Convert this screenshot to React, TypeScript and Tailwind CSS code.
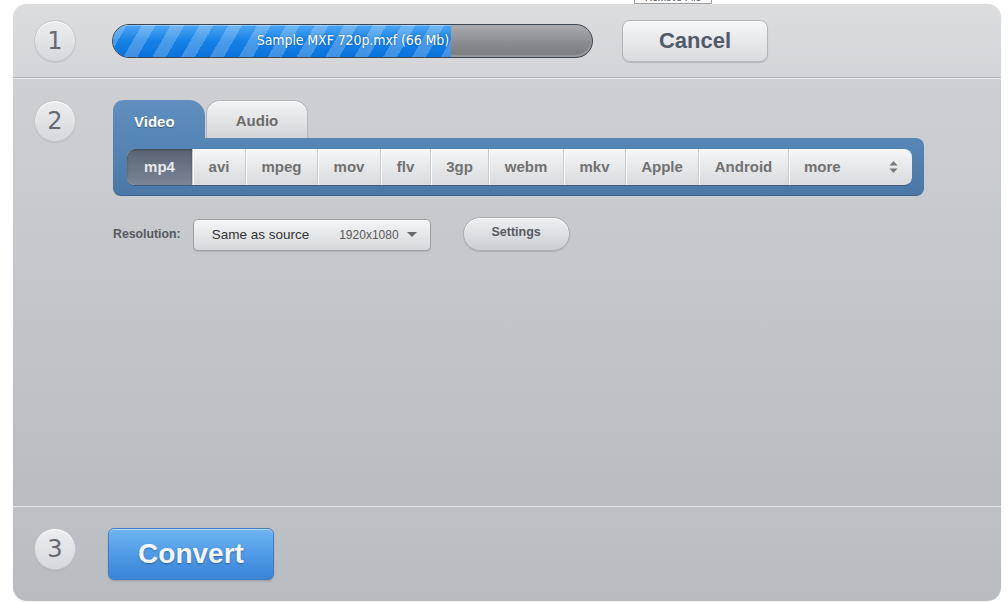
import React from "react";

const formats = [
  { label: "mp4", w: 65 },
  { label: "avi", w: 53 },
  { label: "mpeg", w: 72 },
  { label: "mov", w: 63 },
  { label: "flv", w: 50 },
  { label: "3gp", w: 58 },
  { label: "webm", w: 75 },
  { label: "mkv", w: 62 },
  { label: "Apple", w: 73 },
  { label: "Android", w: 90 },
];

function StepCircle({ n }: { n: string }) {
  return (
    <div className="w-[42px] h-[42px] shrink-0 rounded-full border border-[#c3c5c8] bg-gradient-to-b from-[#eceef0] to-[#d6d8db] shadow-[inset_0_1px_0_#ffffff,0_1px_1px_rgba(0,0,0,0.08)] flex items-center justify-center">
      <span className="text-[24px] leading-none text-[#666a70] font-['DejaVu_Sans',sans-serif] font-normal">{n}</span>
    </div>
  );
}

export default function App() {
  return (
    <div className="relative w-[1008px] h-[602px] bg-white overflow-hidden font-['Liberation_Sans',Arial,sans-serif]">
      <div className="absolute left-[634px] top-[-9px] w-[78px] h-[13px] border border-[#a0a0a0] bg-white text-[10px] leading-[11px] text-center text-[#444] z-10 overflow-hidden">
        Remove File
      </div>

      <div className="ml-[13px] mt-[4px] w-[988px] h-[597px] rounded-[14px] overflow-hidden flex flex-col shadow-[0_0_1px_rgba(0,0,0,0.2)]">
        {/* Section 1 */}
        <div className="h-[74px] shrink-0 bg-gradient-to-b from-[#dcdddf] to-[#d4d5d8] border-b border-[#b3b5b9] flex items-center pl-[21px]">
          <StepCircle n="1" />
          <div className="ml-[36px] w-[481px] h-[34px] rounded-full border border-[#3d4753] overflow-hidden relative bg-gradient-to-b from-[#a9abaf] via-[#8d8f93] to-[#76787c] shadow-[inset_0_-2px_2px_rgba(255,255,255,0.25)] flex">
            <div className="w-[338px] h-full bg-[repeating-linear-gradient(120deg,rgba(255,255,255,0.22)_0px,rgba(255,255,255,0.22)_12px,transparent_12px,transparent_25px),linear-gradient(to_bottom,#4ea6f3,#1581e6_50%,#0a72db)] flex items-center justify-end pr-[2px] shadow-[inset_0_1px_0_rgba(255,255,255,0.35)]">
              <span className="text-white text-[14px] font-['DejaVu_Sans_Condensed','Liberation_Sans',sans-serif] tracking-[-0.1px] [text-shadow:0_0_2px_rgba(0,60,140,0.6)]">
                Sample MXF 720p.mxf (66 Mb)
              </span>
            </div>
          </div>
          <button className="ml-[29px] w-[146px] h-[42px] rounded-[8px] border border-[#b2b5b9] bg-gradient-to-b from-[#f6f7f8] to-[#d9dbde] shadow-[inset_0_1px_0_#ffffff,0_1px_1px_rgba(0,0,0,0.15)] flex items-center justify-center">
            <span className="text-[22px] font-bold text-[#535b68]">Cancel</span>
          </button>
        </div>

        {/* Section 2 */}
        <div className="flex-1 border-t border-[#e6e7e9] bg-gradient-to-b from-[#ced0d3] to-[#b9bcc1] flex pl-[21px] pt-[21px]">
          <StepCircle n="2" />
          <div className="ml-[37px] flex flex-col">
            <div className="flex items-end h-[38px]">
              <div className="w-[92px] h-[38px] rounded-tl-[10px] rounded-tr-[16px] bg-gradient-to-b from-[#6190c0] to-[#5686b6] flex items-center pl-[21px] pt-[6px]">
                <span className="text-white text-[15px] font-bold [text-shadow:0_1px_1px_rgba(0,0,0,0.35)]">Video</span>
              </div>
              <div className="ml-[1px] w-[102px] h-[38px] rounded-t-[14px] border border-b-0 border-[#b5b8bc] bg-gradient-to-b from-[#f3f4f5] to-[#d3d5d8] shadow-[inset_0_1px_0_#ffffff] flex items-center justify-center pt-[4px]">
                <span className="text-[#6b6b6b] text-[15px] font-bold">Audio</span>
              </div>
            </div>
            <div className="w-[811px] h-[58px] rounded-b-[8px] rounded-tr-[8px] bg-gradient-to-b from-[#5787b7] to-[#4a78a6] border-b border-[#3c6590] pl-[14px] pr-[12px] pt-[11px]">
              <div className="h-[37px] rounded-[8px] bg-gradient-to-b from-[#f6f7f8] to-[#d8dadd] flex border-b border-[#3f5f82] overflow-hidden">
                {formats.map((f, i) => (
                  <div
                    key={f.label}
                    style={{ width: f.w }}
                    className={
                      i === 0
                        ? "h-full shrink-0 flex items-center justify-center bg-gradient-to-b from-[#5a6373] to-[#7b8596] shadow-[inset_0_1px_2px_rgba(0,0,0,0.35)]"
                        : "h-full shrink-0 flex items-center justify-center border-l border-[#c8cacd] shadow-[inset_1px_0_0_#ffffff]"
                    }
                  >
                    <span className={i === 0 ? "text-[15px] font-bold text-[#e9ebee]" : "text-[15px] font-bold text-[#717171]"}>
                      {f.label}
                    </span>
                  </div>
                ))}
                <div className="flex-1 h-full flex items-center justify-between border-l border-[#c8cacd] shadow-[inset_1px_0_0_#ffffff] pl-[15px] pr-[14px]">
                  <span className="text-[15px] font-bold text-[#717171]">more</span>
                  <svg width="9" height="14" viewBox="0 0 9 14">
                    <path d="M4.5 1 L8.5 5.5 H0.5 Z" fill="#7a7a7a" />
                    <path d="M4.5 13 L8.5 8.5 H0.5 Z" fill="#7a7a7a" />
                  </svg>
                </div>
              </div>
            </div>

            <div className="mt-[21px] flex items-center h-[34px]">
              <span className="text-[12.3px] font-bold text-[#555a60]">Resolution:</span>
              <div className="ml-[12px] mt-[2px] w-[238px] h-[32px] rounded-[5px] border border-[#9ea1a6] bg-gradient-to-b from-[#f5f6f7] to-[#d5d7da] shadow-[inset_0_1px_0_#ffffff,0_1px_1px_rgba(0,0,0,0.12)] flex items-center pl-[18px] pr-[13px]">
                <span className="text-[13.5px] text-[#333]">Same as source</span>
                <span className="ml-[30px] text-[12px] text-[#5a5a5a]">1920x1080</span>
                <svg className="ml-auto" width="10" height="6" viewBox="0 0 10 6">
                  <path d="M0 0 H10 L5 5 Z" fill="#6a6a6a" />
                </svg>
              </div>
              <button className="ml-[32px] w-[107px] h-[34px] rounded-full border border-[#a9acb1] bg-gradient-to-b from-[#eff0f2] to-[#cbced2] shadow-[inset_0_1px_0_#ffffff,0_1px_1px_rgba(0,0,0,0.12)] flex items-center justify-center pb-[3px]">
                <span className="text-[12.5px] font-bold text-[#565b62]">Settings</span>
              </button>
            </div>
          </div>
        </div>

        {/* Section 3 */}
        <div className="h-[95px] shrink-0 border-t border-[#e4e6e8] bg-gradient-to-b from-[#bec1c6] to-[#b8bbc0] flex items-start pl-[21px] pt-[21px]">
          <StepCircle n="3" />
          <button className="ml-[32px] w-[166px] h-[52px] rounded-[6px] border border-[#3b7fc8] bg-gradient-to-b from-[#70b5f1] via-[#4f9be6] to-[#3a84d4] shadow-[inset_0_1px_0_rgba(255,255,255,0.5),0_1px_2px_rgba(0,0,0,0.2)] flex items-center justify-center">
            <span className="text-[28px] font-bold text-[#f4f6f9] [text-shadow:0_1px_2px_rgba(0,40,100,0.45)]">Convert</span>
          </button>
        </div>
      </div>
    </div>
  );
}
